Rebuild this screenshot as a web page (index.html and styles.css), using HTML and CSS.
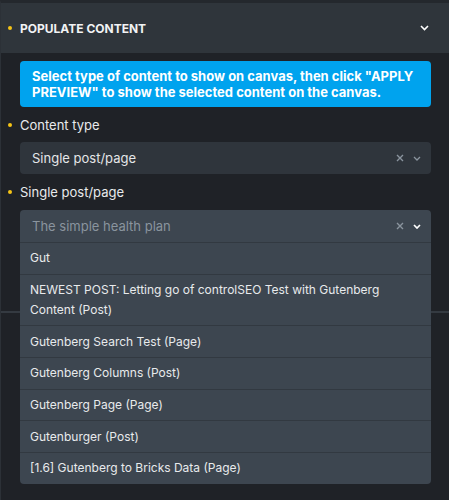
FILE: index.html
```html
<!DOCTYPE html>
<html lang="en">
<head>
    <meta charset="UTF-8">
    <meta name="viewport" content="width=device-width, initial-scale=1.0">
    <title>Populate Content</title>
    <link rel="stylesheet" href="styles.css">
</head>
<body>
    <div class="panel">
        <div class="panel-header">
            <span class="dot"></span>
            <span class="panel-title">Populate Content</span>
            <svg class="head-chevron" width="9" height="6" viewBox="0 0 9 6"><path d="M1 1l3.5 3.5L8 1" fill="none" stroke="#fff" stroke-width="1.6"/></svg>
        </div>
        <div class="panel-body">
            <div class="info">Select type of content to show on canvas, then click "APPLY PREVIEW" to show the selected content on the canvas.</div>

            <div class="label"><span class="dot"></span>Content type</div>
            <div class="select">
                <span class="select-value">Single post/page</span>
                <svg class="clear" width="8" height="8" viewBox="0 0 8 8"><path d="M1 1l6 6M7 1L1 7" stroke="#8a949e" stroke-width="1.4"/></svg>
                <svg class="chevron" width="8" height="5" viewBox="0 0 8 5"><path d="M1 1l3 3 3-3" fill="none" stroke="#8a949e" stroke-width="1.3"/></svg>
            </div>

            <div class="label"><span class="dot"></span>Single post/page</div>
            <div class="select-wrap">
                <div class="select open">
                    <span class="select-value placeholder">The simple health plan</span>
                    <svg class="clear" width="8" height="8" viewBox="0 0 8 8"><path d="M1 1l6 6M7 1L1 7" stroke="#8a949e" stroke-width="1.4"/></svg>
                    <svg class="chevron" width="8" height="5" viewBox="0 0 8 5"><path d="M1 1l3 3 3-3" fill="none" stroke="#fff" stroke-width="1.7"/></svg>
                </div>
                <ul class="menu">
                    <li>Gut</li>
                    <li>NEWEST POST: Letting go of controlSEO Test with Gutenberg Content (Post)</li>
                    <li>Gutenberg Search Test (Page)</li>
                    <li>Gutenberg Columns (Post)</li>
                    <li>Gutenberg Page (Page)</li>
                    <li>Gutenburger (Post)</li>
                    <li>[1.6] Gutenberg to Bricks Data (Page)</li>
                </ul>
            </div>
        </div>
        <div class="next-section"></div>
    </div>
</body>
</html>
```

FILE: styles.css
```css
body {
    margin: 0;
    background-color: #1f2227;
    font-family: Inter, "Liberation Sans", sans-serif;
    color: #e8eaec;
}
.panel {
    border-top: 3px solid #24282d;
    border-left: 1px solid #2c3137;
    min-height: 497px;
}
.panel-header {
    display: flex;
    align-items: center;
    height: 50px;
    padding: 0 20px 0 7px;
    background-color: #2f353b;
}
.dot {
    display: inline-block;
    width: 4px;
    height: 4px;
    border-radius: 50%;
    background-color: #f6c416;
    margin-right: 8px;
    flex-shrink: 0;
}
.panel-title {
    flex: 1;
    font-size: 12px;
    font-weight: 700;
    text-transform: uppercase;
    color: #f2f3f4;
}
.panel-body {
    padding: 8px 18px 68px 19px;
}
.info {
    background-color: #00a3ee;
    color: #fff;
    font-size: 13px;
    font-weight: 700;
    line-height: 16px;
    padding: 7px 12px;
    border-radius: 4px;
}
.label {
    display: flex;
    align-items: center;
    margin: 9px 0 8px -12px;
    font-size: 13px;
    line-height: 18px;
    color: #e8eaec;
}
.select {
    display: flex;
    align-items: center;
    height: 32px;
    padding: 0 10px 0 12px;
    background-color: #2f353c;
    border-radius: 4px;
    font-size: 13px;
}
.label + .select-wrap {
    margin-top: 9px;
}
.select-value {
    flex: 1;
    color: #e4e6e8;
}
.select-value.placeholder {
    color: #8a949e;
}
.clear {
    margin-right: 9px;
}
.select-wrap {
    position: relative;
}
.select.open {
    background-color: #3d4650;
    border-radius: 4px 4px 0 0;
    border-bottom: 1px solid #323941;
}
.menu {
    position: absolute;
    top: 33px;
    left: 0;
    right: 0;
    margin: 0;
    padding: 0;
    list-style: none;
    background-color: #3d4650;
    border-radius: 0 0 4px 4px;
    z-index: 2;
}
.menu li {
    padding: 5.35px 10px;
    font-size: 12px;
    line-height: 20px;
    color: #e8eaec;
    border-top: 1px solid #323941;
}
.menu li:first-child {
    border-top: none;
}
.next-section {
    border-top: 2px solid #343a41;
}
```
